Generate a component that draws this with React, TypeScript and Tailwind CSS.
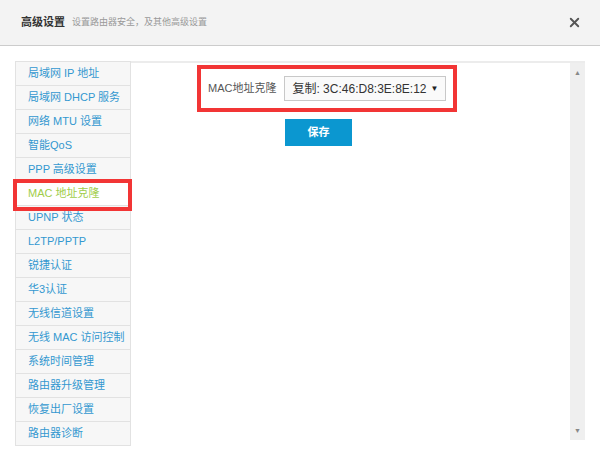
import { X } from "lucide-react"

const menu = [
  "局域网 IP 地址",
  "局域网 DHCP 服务",
  "网络 MTU 设置",
  "智能QoS",
  "PPP 高级设置",
  "MAC 地址克隆",
  "UPNP 状态",
  "L2TP/PPTP",
  "锐捷认证",
  "华3认证",
  "无线信道设置",
  "无线 MAC 访问控制",
  "系统时间管理",
  "路由器升级管理",
  "恢复出厂设置",
  "路由器诊断",
]

export default function App() {
  return (
    <div
      className="w-[600px] h-[457px] bg-white relative overflow-hidden flex flex-col"
      style={{ fontFamily: '"Liberation Sans", "Noto Sans CJK SC", sans-serif' }}
    >
      {/* header */}
      <div className="h-[46px] shrink-0 bg-[#f3f3f3] border-b border-[#cccccc] flex items-center pl-[21px] pr-[18px]">
        <span className="text-[11px] font-bold text-[#333] leading-none">高级设置</span>
        <span className="text-[9px] text-[#999] ml-[7px] leading-none">设置路由器安全，及其他高级设置</span>
        <X className="ml-auto text-[#555]" size={15} strokeWidth={3} />
      </div>

      {/* body */}
      <div className="flex-1 flex pt-[15px] pl-[15px] pr-[15px] pb-[12px] border-b-2 border-[#333]">
        {/* sidebar */}
        <div className="w-[116px] shrink-0 border border-[#e2e2e2] border-b-0 self-start">
          {menu.map((item) => {
            const active = item === "MAC 地址克隆"
            return (
              <div
                key={item}
                className={
                  active
                    ? "relative h-[24px] bg-white flex items-center pl-[12px] text-[11px] text-[#9fcd4a] border-b border-[#e2e2e2]"
                    : "h-[24px] bg-[#f7f7f7] flex items-center pl-[12px] text-[11px] text-[#3398d0] border-b border-[#e2e2e2] whitespace-nowrap"
                }
              >
                {item}
                {active && (
                  <div className="absolute left-[-3px] right-[-2px] top-[-3px] bottom-[-6px] border-4 border-[#f23535]" />
                )}
              </div>
            )
          })}
        </div>

        {/* content */}
        <div className="flex-1 flex border-t-2 border-[#ececec] mb-[6px]">
          <div className="flex-1 pt-[2px]">
            <div className="ml-[66px] w-[260px] h-[47px] border-4 border-[#f23535] flex items-center pl-[7px]">
              <span className="text-[11px] text-[#555] whitespace-nowrap">MAC地址克隆</span>
              <div className="ml-[8px] w-[162px] h-[25px] border border-[#c8c8c8] bg-[#fafafa] flex items-center pl-[7px] pr-[7px]">
                <span className="text-[12px] text-[#333] whitespace-nowrap">复制: 3C:46:D8:3E:8E:12</span>
                <span className="ml-auto text-[8px] text-[#222]">▼</span>
              </div>
            </div>
            <button className="ml-[154px] mt-[7px] w-[67px] h-[27px] bg-[#0b97d0] text-white text-[11px] font-bold flex items-center justify-center">
              保存
            </button>
          </div>
          {/* scrollbar */}
          <div className="w-[15px] bg-[#efefef] flex flex-col items-center justify-between py-[6px]">
            <span className="text-[7px] text-[#888] leading-none">▲</span>
            <span className="text-[7px] text-[#888] leading-none">▼</span>
          </div>
        </div>
      </div>
    </div>
  )
}
